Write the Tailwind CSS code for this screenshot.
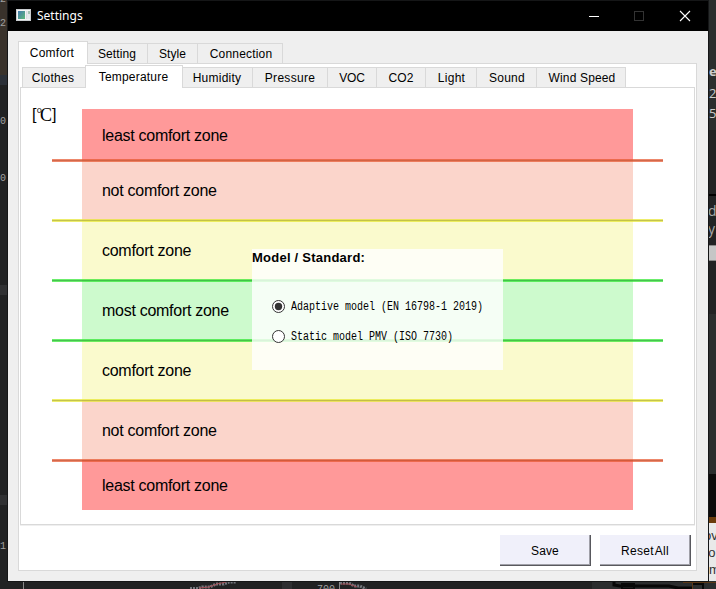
<!DOCTYPE html>
<html lang="en">
<head>
<meta charset="utf-8">
<title>Settings</title>
<script src="https://cdn.jsdelivr.net/npm/@tailwindcss/browser@4"></script>
</head>
<body class="relative w-[716px] h-[589px] overflow-hidden bg-[#212223] font-['Liberation_Sans',Arial,sans-serif] text-black">

<!-- desktop behind the window -->
<div class="absolute inset-0 overflow-hidden font-['Liberation_Mono',monospace] text-[10px] leading-[12px] text-[#a0a0a0]">
  <div class="absolute left-0 top-0 w-2 h-[75px] bg-[#39322b]"></div>
  <div class="absolute left-0 top-[75px] w-2 h-[10px] bg-[#2b3038]"></div>
  <div class="absolute left-0 top-[285px] w-2 h-[10px] bg-[#303133]"></div>
  <div class="absolute left-0 top-[495px] w-2 h-[10px] bg-[#303133]"></div>
  <span class="absolute left-0 -top-[6px]">2</span>
  <span class="absolute left-0 top-[18px]">2</span>
  <span class="absolute left-0 top-[116px]">0</span>
  <span class="absolute left-0 top-[173px]">0</span>
  <span class="absolute left-0 top-[541px]">1</span>
  <div class="absolute left-[708px] top-0 w-2 h-[474px] bg-[#2b2e2e]"></div>
  <div class="absolute left-[709px] top-[130px] w-2 h-[184px] bg-[#222324]"></div>
  <div class="absolute left-[709px] top-[194px] w-2 h-[2px] bg-black"></div>
  <div class="absolute left-[709px] top-[245px] w-2 h-[16px] bg-[#c6c6c6] border-y border-[#888888]"></div>
  <div class="absolute left-[708px] top-[474px] w-2 h-[43px] bg-[#0c0b0b]"></div>
  <div class="absolute left-[709px] top-[517px] w-2 h-[6px] bg-[#6b3c0c]"></div>
  <div class="absolute left-[709px] top-[523px] w-2 h-[58px] bg-[#e9e9e9]"></div>
  <div class="absolute left-[709px] top-[64px] w-4 font-['Open_Sans',sans-serif] text-[13px] leading-[14px] font-bold text-[#cccccc]">e</div>
  <div class="absolute left-[709px] top-[86px] w-4 font-['Open_Sans',sans-serif] text-[13px] leading-[14px] text-[#cccccc]">2</div>
  <div class="absolute left-[709px] top-[106px] w-4 font-['Open_Sans',sans-serif] text-[13px] leading-[14px] text-[#cccccc]">5</div>
  <div class="absolute left-[708px] top-[204px] w-4 font-['Open_Sans',sans-serif] text-[14px] leading-[14px] text-[#a9a9a9]">d</div>
  <div class="absolute left-[708px] top-[222px] w-4 font-['Open_Sans',sans-serif] text-[14px] leading-[14px] text-[#a9a9a9]">y</div>
  <div class="absolute left-[704px] top-[527px] w-8 font-['Liberation_Sans',sans-serif] text-[13px] leading-[17px] text-[#333333]">ov<br>ro<br><span class="ml-[5px]">m</span></div>
  <div class="absolute left-[592px] top-[581px] w-[124px] h-2 bg-[#2b2d2e]"></div>
  <div class="absolute left-[282px] top-[581px] w-[10px] h-2 bg-[#2e2f31]"></div>
  <span class="absolute left-[317px] top-[584px]">700</span>
  <svg class="absolute left-0 top-[581px]" width="716" height="8" fill="none">
    <path d="M23.500 1V8M339.500 1V8" stroke="#888"/>
    <path d="M190 7.500H198L202 6H210L216 3H224L229 1H236M340 2H349L354 5H360L366 8" stroke="#74777d" stroke-width="3" stroke-dasharray="2 1"/>
    <path d="M199 7L209 6L217 3L226 1M341 3H349L357 6" stroke="#a34c54"/>
    <path d="M614 1V4L620 5H669L678 7H692" stroke="#070707" stroke-width="3"/>
    <path d="M622 3H634V8H622ZM693 3H703V8" stroke="#080808" stroke-width="2"/>
    <path d="M683 1.500H716M692.500 2V8" stroke="#5b3817"/>
  </svg>
</div>

<!-- settings window -->
<main class="relative ml-2 mt-px w-[700px] h-[580px] flex flex-col bg-[#efefef] shadow-[0_0_0_1px_#151617]">
  <header class="h-[30px] shrink-0 bg-black flex items-center pl-2">
    <svg class="-mt-[2px]" width="16" height="13" viewBox="0 0 16 13">
      <defs>
        <linearGradient id="ig" x1="0" y1="0" x2="1" y2="1"><stop stop-color="#437ab0"/><stop offset="1" stop-color="#5eb878"/></linearGradient>
      </defs>
      <rect x=".5" y=".5" width="14" height="11" fill="#f4f4f4" stroke="#c9cdd0"/>
      <rect x="2" y="2" width="7" height="8" fill="url(#ig)"/>
      <rect x="10" y="2" width="1.500" height="8" fill="#d9dce2"/><rect x="12" y="2" width="2" height="3" fill="#a6c3b4"/><rect x="12" y="5" width="2" height="5" fill="#e5e8ed"/>
    </svg>
    <h1 class="ml-[5px] font-['Noto_Sans',sans-serif] text-[12px] leading-[16px] text-white">Settings</h1>
    <svg class="ml-auto mr-[16px] -mt-px" width="103" height="13" viewBox="0 0 103 13" fill="none">
      <path d="M0 7.500H10" stroke="#fff"/>
      <rect x="45.500" y="2.500" width="9" height="9" stroke="#333"/>
      <path d="M91 2L101 12M101 2L91 12" stroke="#fff" stroke-width="1.100"/>
    </svg>
  </header>

  <section class="pl-[10px] pt-[10px] pr-[11px] h-[550px] text-[12px] leading-[14px] tracking-[0.1px]">
    <nav class="relative z-10 flex items-end h-[23px] -mb-px">
      <div class="w-[70px] h-[23px] bg-white border border-b-0 border-[#d9d9d9] flex justify-center pt-[4px] pr-[2px] tracking-[0.25px]">Comfort</div>
      <div class="w-[60px] h-[21px] bg-[#efefef] border border-l-0 border-[#d9d9d9] flex justify-center pt-[3px] pr-px">Setting</div>
      <div class="w-[50px] h-[21px] bg-[#efefef] border border-l-0 border-[#d9d9d9] flex justify-center pt-[3px]">Style</div>
      <div class="w-[85px] h-[21px] bg-[#efefef] border border-l-0 border-[#d9d9d9] flex justify-center pt-[3px] pl-[2px] tracking-[0.2px]">Connection</div>
    </nav>
    <div class="w-[679px] h-[508px] bg-white border border-[#d9d9d9] pl-px pt-px">
      <nav class="relative z-10 flex items-end h-[23px] -mb-px pl-[2px]">
        <div class="w-[63px] h-[21px] bg-[#efefef] border border-r-0 border-[#d9d9d9] flex justify-center pt-[3px] pr-[2px] tracking-[0.25px]">Clothes</div>
        <div class="w-[98px] h-[23px] bg-white border border-b-0 border-[#d9d9d9] flex justify-center pt-[4px] pr-px tracking-[0.2px]">Temperature</div>
        <div class="w-[70px] h-[21px] bg-[#efefef] border border-l-0 border-[#d9d9d9] flex justify-center pt-[3px] pr-px tracking-[0.25px]">Humidity</div>
        <div class="w-[75px] h-[21px] bg-[#efefef] border border-l-0 border-[#d9d9d9] flex justify-center pt-[3px] tracking-[0.3px]">Pressure</div>
        <div class="w-[49px] h-[21px] bg-[#efefef] border border-l-0 border-[#d9d9d9] flex justify-center pt-[3px] tracking-[-0.2px]">VOC</div>
        <div class="w-[49px] h-[21px] bg-[#efefef] border border-l-0 border-[#d9d9d9] flex justify-center pt-[3px]">CO2</div>
        <div class="w-[51px] h-[21px] bg-[#efefef] border border-l-0 border-[#d9d9d9] flex justify-center pt-[3px] pl-px tracking-[0.3px]">Light</div>
        <div class="w-[60px] h-[21px] bg-[#efefef] border border-l-0 border-[#d9d9d9] flex justify-center pt-[3px] pl-px tracking-[0.25px]">Sound</div>
        <div class="w-[89px] h-[21px] bg-[#efefef] border border-l-0 border-[#d9d9d9] flex justify-center pt-[3px] pl-[2px] tracking-[0.15px]">Wind Speed</div>
      </nav>

      <div class="relative w-[675px] h-[438px] border border-[#d9d9d9] shadow-[0_1px_0_#efefef] pt-[21px] pl-[61px]">
        <div class="absolute left-[11px] top-[18px] text-[16px] leading-[18px] tracking-normal flex">[<span class="w-[15.500px] flex font-['Liberation_Serif',serif]"><span class="w-[3.500px] text-[14px] leading-[15px]">°</span><span class="text-[18px] leading-[19px]">C</span></span>]</div>

        <div class="w-[551px] text-[16px] leading-[20px] tracking-[-0.28px]">
          <div class="h-[51px] bg-[#ff9999] pl-5 pt-[17px]">least comfort zone</div>
          <div class="relative h-[60px] bg-[#fbd5cb] pl-5 pt-[21px]">not comfort zone<i class="absolute -left-[30px] -top-px w-[611px] h-[3px] bg-[#e6552d]/70 py-px"><b class="block h-px bg-[#b84a2a]/50"></b></i></div>
          <div class="relative h-[60px] bg-[#fafacd] pl-5 pt-[21px]">comfort zone<i class="absolute -left-[30px] -top-px w-[611px] h-[3px] bg-[#e6e62d]/70 py-px"><b class="block h-px bg-[#a6a63a]/60"></b></i></div>
          <div class="relative h-[60px] bg-[#cdfacd] pl-5 pt-[21px]">most comfort zone<i class="absolute -left-[30px] -top-px w-[611px] h-[3px] bg-[#2de62d]/70 py-px"><b class="block h-px bg-[#2da63a]/60"></b></i></div>
          <div class="relative h-[60px] bg-[#fafacd] pl-5 pt-[21px]">comfort zone<i class="absolute -left-[30px] -top-px w-[611px] h-[3px] bg-[#2de62d]/70 py-px"><b class="block h-px bg-[#2da63a]/60"></b></i></div>
          <div class="relative h-[60px] bg-[#fbd5cb] pl-5 pt-[21px]">not comfort zone<i class="absolute -left-[30px] -top-px w-[611px] h-[3px] bg-[#e6e62d]/70 py-px"><b class="block h-px bg-[#a6a63a]/60"></b></i></div>
          <div class="relative h-[50px] bg-[#ff9999] pl-5 pt-[16px]">least comfort zone<i class="absolute -left-[30px] -top-px w-[611px] h-[3px] bg-[#e6552d]/70 py-px"><b class="block h-px bg-[#b84a2a]/50"></b></i></div>
        </div>

        <!-- model chooser laid over the zones -->
        <div class="absolute left-[231px] top-[161px] w-[251px] h-[121px] bg-white/80">
          <h2 class="pt-px text-[13px] leading-[16px] font-bold tracking-[0.24px]">Model / Standard:</h2>
          <div class="mt-[34px] ml-5 flex flex-col gap-[17px] font-['Liberation_Mono',monospace] text-[10px] leading-[13px] tracking-normal whitespace-pre">
            <label class="flex items-center h-[13px]"><svg width="13" height="13"><circle cx="6.500" cy="6.500" r="6" fill="#fff" stroke="#333"/><circle cx="6.500" cy="6.500" r="3.700" fill="#333"/></svg><span class="ml-[6px] scale-y-[1.200]">Adaptive model (EN 16798-1 2019)</span></label>
            <label class="flex items-center h-[13px]"><svg width="13" height="13"><circle cx="6.500" cy="6.500" r="6" fill="#fff" stroke="#333"/></svg><span class="ml-[6px] scale-y-[1.200]">Static model PMV (ISO 7730)</span></label>
          </div>
        </div>
      </div>

      <div class="flex gap-[9px] pl-[480px] mt-[10px]">
        <div class="w-[91px] h-[31px] bg-[#f0f0fa] border-r border-b border-[#58585d] shadow-[inset_-1px_-1px_0_#a0a0a8] flex justify-center pt-[9px]">Save</div>
        <div class="w-[91px] h-[31px] bg-[#f0f0fa] border-r border-b border-[#58585d] shadow-[inset_-1px_-1px_0_#a0a0a8] flex justify-center pt-[9px] tracking-[0.3px] [word-spacing:-2px]">Reset All</div>
      </div>
    </div>
  </section>
</main>
</body>
</html>
